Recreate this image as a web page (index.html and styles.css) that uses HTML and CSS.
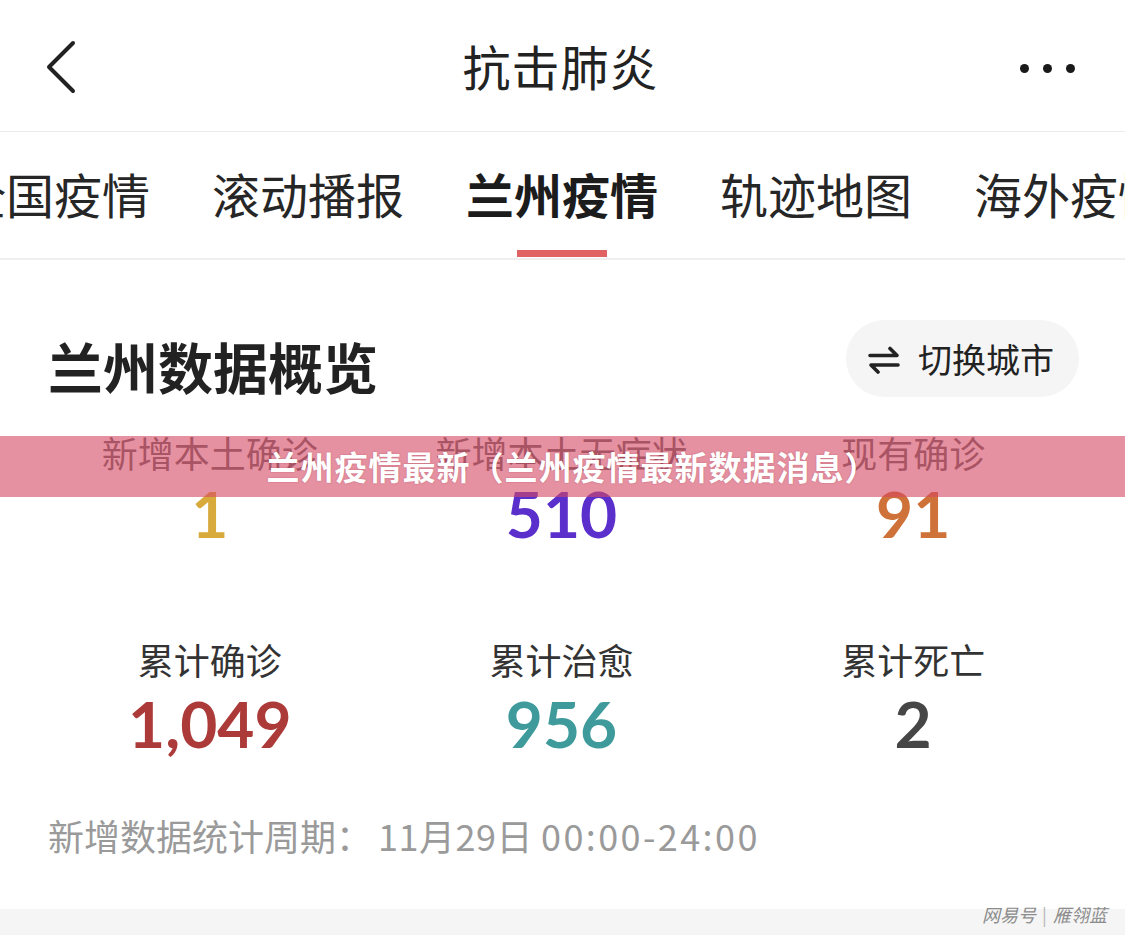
FILE: index.html
```html
<!DOCTYPE html>
<html lang="zh-CN">
<head>
	<meta charset="UTF-8">
	<title>抗击肺炎</title>
	<meta name="viewport" content="width=device-width,user-scalable=no">
	<link rel="stylesheet" href="styles.css">
</head>
<body>
	<header class="topbar">
		<a href="javascript:;" class="back">
			<svg width="30" height="54" viewBox="0 0 30 54"><polyline points="27,3 3,27 27,51" fill="none" stroke="#222" stroke-width="4" stroke-linecap="round" stroke-linejoin="round"/></svg>
		</a>
		<h1 class="title">抗击肺炎</h1>
		<a href="javascript:;" class="more">
			<i></i><i></i><i></i>
		</a>
	</header>

	<nav class="tabs">
		<div class="tab-row">
			<a href="javascript:;" class="tab">全国疫情</a>
			<a href="javascript:;" class="tab">滚动播报</a>
			<a href="javascript:;" class="tab active">兰州疫情</a>
			<a href="javascript:;" class="tab">轨迹地图</a>
			<a href="javascript:;" class="tab">海外疫情</a>
		</div>
	</nav>

	<section class="overview">
		<div class="overview-head">
			<h2 class="overview-title">兰州数据概览</h2>
			<a href="javascript:;" class="switch">
				<svg width="32" height="28" viewBox="0 0 32 28"><path d="M2 9.5H29L22 2.5M30 19H3L10 26" fill="none" stroke="#222" stroke-width="3.6" stroke-linecap="round" stroke-linejoin="round"/></svg>
				<span>切换城市</span>
			</a>
		</div>

		<ul class="stats">
			<li class="stat">
				<p class="stat-label light">新增本土确诊</p>
				<p class="stat-num gold">1</p>
			</li>
			<li class="stat">
				<p class="stat-label light">新增本土无症状</p>
				<p class="stat-num purple">510</p>
			</li>
			<li class="stat">
				<p class="stat-label light">现有确诊</p>
				<p class="stat-num orange">91</p>
			</li>
			<li class="stat">
				<p class="stat-label">累计确诊</p>
				<p class="stat-num red">1,049</p>
			</li>
			<li class="stat">
				<p class="stat-label">累计治愈</p>
				<p class="stat-num teal">956</p>
			</li>
			<li class="stat">
				<p class="stat-label">累计死亡</p>
				<p class="stat-num dark">2</p>
			</li>
		</ul>

		<p class="period">新增数据统计周期：<span class="date">11月29日</span> <span class="time">00:00-24:00</span></p>
	</section>

	<footer class="band">
		<span class="mark">网易号 <em>|</em> 雁翎蓝</span>
	</footer>

	<div class="headline">兰州疫情最新（兰州疫情最新数据消息）</div>
</body>
</html>
```

FILE: styles.css
```css
body{
	margin: 0;
	background: #fff;
	font-family: "Noto Sans CJK SC", "Noto Sans", sans-serif;
	color: #222;
	position: relative;
	overflow: hidden;
}
a{
	color: inherit;
	text-decoration: none;
}
p, h1, h2, ul{
	margin: 0;
	padding: 0;
}

/* top bar */
.topbar{
	height: 131px;
	border-bottom: 1px solid #ebebeb;
	display: flex;
	align-items: center;
	justify-content: space-between;
	padding: 0 50px 0 46px;
}
.back{
	display: flex;
	width: 60px;
	margin-top: 2px;
}
.title{
	font-size: 48px;
	font-weight: 400;
	line-height: 1;
	letter-spacing: 1px;
	margin-top: -2px;
}
.more{
	width: 60px;
	display: flex;
	justify-content: flex-end;
	gap: 14px;
	margin-top: 6px;
}
.more i{
	width: 9px;
	height: 9px;
	border-radius: 50%;
	background: #1a1a1a;
}

/* tabs */
.tabs{
	height: 126px;
	border-bottom: 2px solid #efefef;
	overflow: hidden;
}
.tab-row{
	display: flex;
	gap: 62px;
	margin-left: -42px;
	height: 100%;
}
.tab{
	display: flex;
	flex-direction: column;
	align-items: center;
	flex: none;
	font-size: 48px;
	line-height: 48px;
	padding-top: 37px;
	color: #262626;
	white-space: nowrap;
}
.tab.active{
	font-weight: 700;
	color: #1c1c1c;
}
.tab.active::after{
	content: "";
	display: block;
	margin-top: auto;
	margin-bottom: 1px;
	width: 90px;
	height: 7px;
	background: #e06262;
}

/* overview */
.overview{
	padding: 0 46px 0 48px;
}
.overview-head{
	display: flex;
	justify-content: space-between;
	align-items: center;
	margin-top: 60px;
}
.overview-title{
	font-size: 55px;
	font-weight: 700;
	line-height: 1;
	margin-top: 14px;
	color: #222;
}
.switch{
	display: flex;
	align-items: center;
	gap: 18px;
	height: 77px;
	padding: 0 25px 0 22px;
	border-radius: 39px;
	background: #f5f5f5;
	font-size: 34px;
	color: #222;
}
.switch svg{
	margin-top: 2px;
}

.stats{
	list-style: none;
	display: grid;
	grid-template-columns: repeat(3, 1fr);
	row-gap: 88px;
	margin: 33px -10px 0 -14px;
}
.stat{
	display: flex;
	flex-direction: column;
	align-items: center;
}
.stat-label{
	font-size: 36px;
	line-height: 44px;
	color: #333;
}
.stat-label.light{
	color: #666;
}
.stat-num{
	font-family: "Lato", "Open Sans", sans-serif;
	font-weight: 700;
	font-size: 64px;
	line-height: 70px;
	margin-top: 5px;
}
.stat:nth-child(n+4) .stat-num{
	margin-top: 8px;
}
.gold{ color: #d8aa3c; }
.purple{ color: #5a2fcb; }
.orange{ color: #cf7239; }
.red{ color: #ab3a38; }
.teal{ color: #3e9a9b; }
.dark{ color: #464646; }

.period{
	margin-top: 54px;
	font-size: 36px;
	line-height: 44px;
	color: #9a9a9a;
}
.period .date{
	margin-left: 6px;
	letter-spacing: 0.5px;
}
.period .time{
	letter-spacing: 2.4px;
}

/* bottom strip with source mark */
.band{
	margin-top: 52px;
	height: 27px;
	background: #f5f5f5;
	display: flex;
	justify-content: flex-end;
	padding-right: 18px;
}
.mark{
	font-size: 18px;
	line-height: 18px;
	margin-top: -4px;
	color: #8c8c8c;
	font-style: italic;
}
.mark em{
	font-style: normal;
	color: #b5b5b5;
	margin: 0 2px;
}

/* headline strip laid over the page */
.headline{
	position: absolute;
	top: 436px;
	left: 0;
	right: 0;
	height: 61px;
	padding-left: 20px;
	background: rgba(214, 72, 98, 0.6);
	color: #fff;
	font-size: 33px;
	font-weight: 700;
	letter-spacing: 1px;
	line-height: 61px;
	text-align: center;
	text-shadow: 0 0 2px rgba(120, 30, 50, 0.35);
}
```
